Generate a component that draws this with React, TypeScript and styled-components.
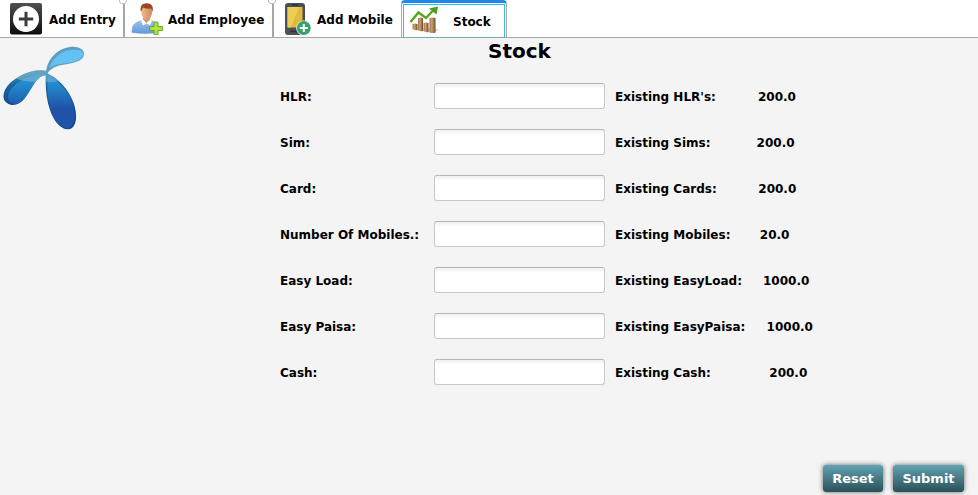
import React from "react";
import styled, { createGlobalStyle } from "styled-components";

const GlobalStyle = createGlobalStyle`
  * { box-sizing: border-box; }
  body {
    margin: 0;
    background: #f4f4f4;
    color: #000;
    font: bold 12px/16px "DejaVu Sans", sans-serif;
    overflow: hidden;
  }
`;

const Page = styled.div`
  width: 978px;
  height: 495px;
  display: flex;
  flex-direction: column;
`;

const TabBar = styled.nav`
  height: 38px;
  flex: none;
  display: flex;
  background: #fff;
  border-bottom: 1px solid #a3a8a8;
`;

const Tab = styled.div<{ $width: number; $gap: number; $pad: number; $last?: boolean }>`
  position: relative;
  width: ${(p) => p.$width}px;
  height: 37px;
  display: flex;
  align-items: center;
  padding: 2px 0 0 ${(p) => p.$pad}px;
  gap: ${(p) => p.$gap}px;
  border-right: ${(p) => (p.$last ? "0" : "2px solid #a3a8a6")};
  white-space: nowrap;
  svg { flex: none; margin-top: -2px; }

  &::after {
    content: "";
    display: ${(p) => (p.$last ? "none" : "block")};
    position: absolute;
    top: -3px;
    right: -4px;
    width: 6px;
    height: 5px;
    border: 1px solid #bcc1bf;
    border-radius: 3px;
    background: #fff;
  }
`;

const ActiveTab = styled.div`
  width: 106px;
  height: 38px;
  padding: 1px 1px 0;
  border: 1px solid #a9aaab;
  border-top: 3px solid #2288e8;
  border-bottom: 0;
  border-radius: 4px 4px 0 0;
`;

const ActiveInner = styled.div`
  height: 34px;
  display: flex;
  align-items: center;
  gap: 12px;
  padding: 0 0 0 5px;
  border: 1px solid #45b7d6;
  border-top-color: #1fc3f3;
  border-bottom-color: #7aa9b8;
  svg { flex: none; margin-top: -2px; }
  span { padding-top: 1px; }
`;

const Body = styled.main`
  flex: 1;
  display: grid;
  grid-template-columns: 280px 1fr;
  grid-template-rows: 45px 1fr 43px;
`;

const LogoBox = styled.div`
  grid-row: 1 / 3;
  padding-top: 2px;
`;

const Title = styled.h1`
  margin: 0;
  padding: 1px 0 0 208px;
  font-size: 20px;
  line-height: 24px;
`;

const Form = styled.div`
  display: flex;
  flex-direction: column;
  gap: 20px;
`;

const Row = styled.div<{ $value: number }>`
  display: grid;
  grid-template-columns: 154px 181px ${(p) => p.$value - 615}px 1fr;
  height: 26px;
  align-items: center;
  white-space: nowrap;
  span { padding-top: 2px; }
`;

const Field = styled.input`
  width: 171px;
  height: 26px;
  border: 1px solid #c8c8c8;
  border-top-color: #b5b5b5;
  border-radius: 3px;
  background: linear-gradient(#f0f0f0, #fff 5px);
  outline: none;
`;

const Actions = styled.div`
  grid-column: 1 / 3;
  grid-row: 3;
  display: flex;
  justify-content: flex-end;
  gap: 10px;
  padding: 13px 14px 0 0;
`;

const ActionButton = styled.button<{ $width: number }>`
  width: ${(p) => p.$width}px;
  height: 27px;
  padding: 0;
  border: 0;
  border-radius: 3px;
  background: linear-gradient(#61a2b1, #2a5058);
  box-shadow: 0 0 5px rgba(0, 0, 0, 0.6);
  color: #fff;
  font: bold 13px/27px "DejaVu Sans", sans-serif;
`;

const EntryIcon = () => (
  <svg width="32" height="32" viewBox="0 0 32 32">
    <defs>
      <linearGradient id="entry" x2="0" y2="1">
        <stop stopColor="#505050" />
        <stop offset="1" stopColor="#0d0d0d" />
      </linearGradient>
    </defs>
    <rect width="32" height="31.500" rx="2" fill="url(#entry)" />
    <circle cx="16" cy="16" r="13" fill="#fff" />
    <path d="M16 8.800v14.400M8.800 16h14.400" stroke="#3c3c3c" strokeWidth="3" />
  </svg>
);

const EmployeeIcon = () => (
  <svg width="32" height="32" viewBox="0 0 32 32">
    <defs>
      <linearGradient id="shirt" x2="0" y2="1">
        <stop stopColor="#9fc3f0" />
        <stop offset="1" stopColor="#6498dc" />
      </linearGradient>
      <linearGradient id="skin" x2="1" y2="0">
        <stop stopColor="#f1ba90" />
        <stop offset="1" stopColor="#cf8a5b" />
      </linearGradient>
    </defs>
    <path d="M1 29.500c0-7 2-9 6-10.500l4-1.500h9l4 1.500c3 1.500 3 5 3 10.500Q14 31.500 1 29.500Z" fill="url(#shirt)" stroke="#6d98d0" strokeWidth=".6" />
    <path d="M12 14h7v4l-3.500 3-3.500-3Z" fill="#d2946b" />
    <path d="m10 17.500 2-1 3.500 3.500 3.500-3.500 2 1-2 5-3.500-2-3.500 2Z" fill="#fff" />
    <ellipse cx="15.700" cy="9.500" rx="5.300" ry="7" fill="url(#skin)" />
    <path d="M10 9C8.500 3 11 .2 15.700 .2S23 3 21.400 9l-1.400-3.500q-4 .8-8-1Z" fill="#9a4620" />
    <path d="M23 19h4v4.500h4.500v4H27V32h-4v-4.500h-4.500v-4H23Z" fill="#a5df35" stroke="#64a42b" strokeWidth=".9" />
    <path d="M25 20.500v9.500M20.500 25.500h9" stroke="#b6e955" />
  </svg>
);

const MobileIcon = () => (
  <svg width="32" height="32" viewBox="0 0 32 32">
    <rect x="4" width="20" height="32" rx="3" fill="#495058" />
    <path d="M6.500 4h15v20.500h-15Z" fill="#e0b941" />
    <path d="M6.500 4h12l-9 20.500h-3Z" fill="#edcd54" />
    <path d="M11 2h6M9 28.500h7" stroke="#2b323a" strokeWidth="1.500" />
    <circle cx="22.800" cy="25" r="7.600" fill="#fff" />
    <circle cx="22.800" cy="25" r="6.900" fill="#35a36b" />
    <path d="M22.800 21v8M18.800 25h8" stroke="#fff" strokeWidth="2" />
  </svg>
);

const StockIcon = () => (
  <svg width="32" height="32" viewBox="0 0 32 32">
    <defs>
      <linearGradient id="bar">
        <stop stopColor="#a1774a" />
        <stop offset=".4" stopColor="#cba16f" />
        <stop offset="1" stopColor="#714b2c" />
      </linearGradient>
    </defs>
    <path d="m5 24 18 5 7-3-4-2Z" fill="#ddd" />
    <path d="M3.500 20q2.500-1 5 0v6q-2 1-5-1Z" fill="url(#bar)" />
    <path d="M9 14q2.500-1 5 0v13q-3 1-5-1Z" fill="url(#bar)" />
    <path d="M14.500 19q2.500-1 5 0v9q-2 1-5-1Z" fill="url(#bar)" />
    <path d="M20.500 14q3-1 6 0v14.500q-3 1-6 0Z" fill="url(#bar)" />
    <path d="m1.500 18 8-9.500 7.500 5.500 8-8.500" fill="none" stroke="#56a41e" strokeWidth="2.400" />
    <path d="m20 4.500 9-2-1.500 8Z" fill="#519e1b" />
  </svg>
);

const Logo = () => (
  <svg width="95" height="95" viewBox="0 0 95 95">
    <defs>
      <linearGradient id="leaf" gradientUnits="userSpaceOnUse" x1="0" y1="31" x2="0" y2="90">
        <stop stopColor="#38a3dc" />
        <stop offset=".22" stopColor="#228bce" />
        <stop offset=".65" stopColor="#2051a6" />
        <stop offset="1" stopColor="#2055ac" />
      </linearGradient>
      <linearGradient id="edge" gradientUnits="userSpaceOnUse" x1="0" y1="30" x2="0" y2="66">
        <stop stopColor="#4898bd" />
        <stop offset=".4" stopColor="#1969a1" />
        <stop offset="1" stopColor="#18488f" />
      </linearGradient>
      <clipPath id="leftLeaf"><path d="M47 31C34 28 19 35 10 43 3 50 1 59 7 63c7 5 15 0 20-8 7-10 10-20 20-20Z" /></clipPath>
      <clipPath id="lowerLeaf"><path d="M46 33c12 4 23 17 28 31 4 13 2 23-4 25-8 2-16-7-20-19-4-11-5-26-4-37Z" /></clipPath>
    </defs>
    <path d="M46 33c1-13 10-24 24-26 8-1 14 2 14 7 0 6-7 8-16 10-9 1-17 3-21 10Z" fill="#5a9fc2" />
    <path d="M49 28c3-8 11-17 21-18 8-1 13 0 13 4 0 5-7 8-16 9-8 1-13 2-18 5Z" fill="#65c1f2" />
    <g clipPath="url(#leftLeaf)">
      <path d="M0 26h50v42H0Z" fill="url(#edge)" />
      <path d="M48 35C31 33 18 41 11 49c-5 7-3 12 1 14 8 4 16-2 22-13 4-8 8-14 15-15Z" fill="url(#leaf)" />
      <path d="M17 39Q30 43 47 42V27H17Z" fill="#87bdd3" opacity=".5" />
    </g>
    <g clipPath="url(#lowerLeaf)">
      <path d="M43 31h34v62H43Z" fill="url(#edge)" />
      <path d="M48 36c10 4 21 15 25 29 4 14 0 23-5 23-7 1-15-8-18-21-3-10-3-21-2-31Z" fill="url(#leaf)" />
      <path d="M44 42q9 1 18-2V30H44Z" fill="#87bdd3" opacity=".45" />
    </g>
    <path d="M34 31q8-1 14 2l1 2q-8-2-14-1Z" fill="#629fb9" opacity=".7" />
  </svg>
);

const rows = [
  { label: "HLR:", existing: "Existing HLR's:", value: "200.0", x: 758 },
  { label: "Sim:", existing: "Existing Sims:", value: "200.0", x: 756.6 },
  { label: "Card:", existing: "Existing Cards:", value: "200.0", x: 758.3 },
  { label: "Number Of Mobiles.:", existing: "Existing Mobiles:", value: "20.0", x: 759.8 },
  { label: "Easy Load:", existing: "Existing EasyLoad:", value: "1000.0", x: 763 },
  { label: "Easy Paisa:", existing: "Existing EasyPaisa:", value: "1000.0", x: 766.6 },
  { label: "Cash:", existing: "Existing Cash:", value: "200.0", x: 769.3 },
];

export default function App() {
  return (
    <Page>
      <GlobalStyle />
      <TabBar>
        <Tab $width={125} $pad={10} $gap={7}><EntryIcon />Add Entry</Tab>
        <Tab $width={149} $pad={6} $gap={5}><EmployeeIcon />Add Employee</Tab>
        <Tab $width={127} $pad={7} $gap={4} $last><MobileIcon />Add Mobile</Tab>
        <ActiveTab>
          <ActiveInner><StockIcon /><span>Stock</span></ActiveInner>
        </ActiveTab>
      </TabBar>
      <Body>
        <LogoBox><Logo /></LogoBox>
        <Title>Stock</Title>
        <Form>
          {rows.map((row) => (
            <Row key={row.label} $value={row.x}>
              <span>{row.label}</span>
              <Field aria-label={row.label} />
              <span>{row.existing}</span>
              <span>{row.value}</span>
            </Row>
          ))}
        </Form>
        <Actions>
          <ActionButton $width={60}>Reset</ActionButton>
          <ActionButton $width={71}>Submit</ActionButton>
        </Actions>
      </Body>
    </Page>
  );
}
